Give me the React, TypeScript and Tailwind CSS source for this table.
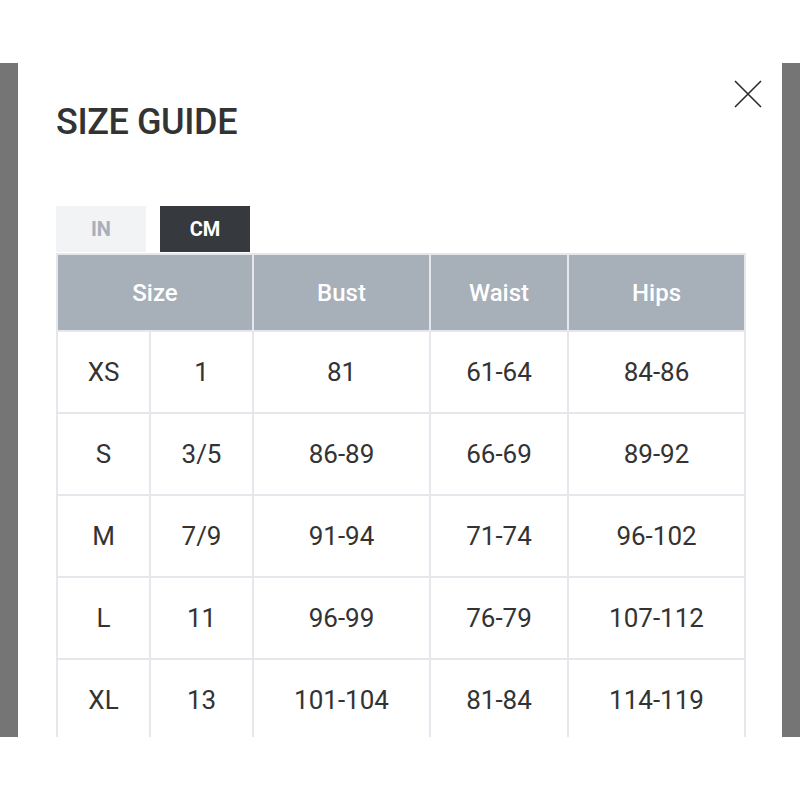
import React, { useState } from 'react';

interface SizeRow {
  label: string;
  us: string;
  bust: string;
  waist: string;
  hips: string;
}

const rows: SizeRow[] = [
  { label: 'XS', us: '1', bust: '81', waist: '61-64', hips: '84-86' },
  { label: 'S', us: '3/5', bust: '86-89', waist: '66-69', hips: '89-92' },
  { label: 'M', us: '7/9', bust: '91-94', waist: '71-74', hips: '96-102' },
  { label: 'L', us: '11', bust: '96-99', waist: '76-79', hips: '107-112' },
  { label: 'XL', us: '13', bust: '101-104', waist: '81-84', hips: '114-119' },
];

const cell = 'border-2 border-[#e6e7ec] text-center align-middle';

const App: React.FC = () => {
  const [unit, setUnit] = useState<'in' | 'cm'>('cm');

  return (
    <div className="min-h-[800px] bg-white font-['Roboto',sans-serif] text-[#333333]">
      <div className="pt-[63px]">
        <div className="h-[674px] overflow-hidden bg-[#757575] px-[18px]">
          <div className="relative h-full bg-white pl-[38px] pt-[41px]">
            <button className="absolute right-[20px] top-[17px] h-[28px] w-[28px]" aria-label="Close">
              <svg viewBox="0 0 28 28" className="h-[28px] w-[28px]" fill="none" stroke="#2b2b2b" strokeWidth="1.6">
                <path d="M1 1 L27 27 M27 1 L1 27" />
              </svg>
            </button>

            <h2 className="text-[36px] font-medium leading-none tracking-[-0.4px] text-[#333333]">SIZE GUIDE</h2>

            <div className="mt-[66px] flex gap-[14px]">
              <button
                onClick={() => setUnit('in')}
                className={`h-[46px] w-[90px] text-[20px] font-bold ${
                  unit === 'in' ? 'bg-[#36393e] text-white' : 'bg-[#f2f3f5] text-[#a7afba]'
                }`}
              >
                IN
              </button>
              <button
                onClick={() => setUnit('cm')}
                className={`h-[46px] w-[90px] text-[20px] font-bold ${
                  unit === 'cm' ? 'bg-[#36393e] text-white' : 'bg-[#f2f3f5] text-[#a7afba]'
                }`}
              >
                CM
              </button>
            </div>

            <table className="mt-[1px] w-[688px] table-fixed border-collapse">
              <colgroup>
                <col className="w-[93px]" />
                <col className="w-[103px]" />
                <col className="w-[177px]" />
                <col className="w-[138px]" />
                <col className="w-[177px]" />
              </colgroup>
              <thead>
                <tr className="h-[77px] bg-[#a7afb9] text-[24px] font-medium text-white">
                  <th colSpan={2} className={`${cell} font-medium`}>Size</th>
                  <th className={`${cell} font-medium`}>Bust</th>
                  <th className={`${cell} font-medium`}>Waist</th>
                  <th className={`${cell} font-medium`}>Hips</th>
                </tr>
              </thead>
              <tbody className="text-[26px] text-[#333333]">
                {rows.map((row) => (
                  <tr key={row.label} className="h-[82px]">
                    <td className={cell}>{row.label}</td>
                    <td className={cell}>{row.us}</td>
                    <td className={cell}>{row.bust}</td>
                    <td className={cell}>{row.waist}</td>
                    <td className={cell}>{row.hips}</td>
                  </tr>
                ))}
              </tbody>
            </table>
          </div>
        </div>
      </div>
    </div>
  );
};

export default App;
